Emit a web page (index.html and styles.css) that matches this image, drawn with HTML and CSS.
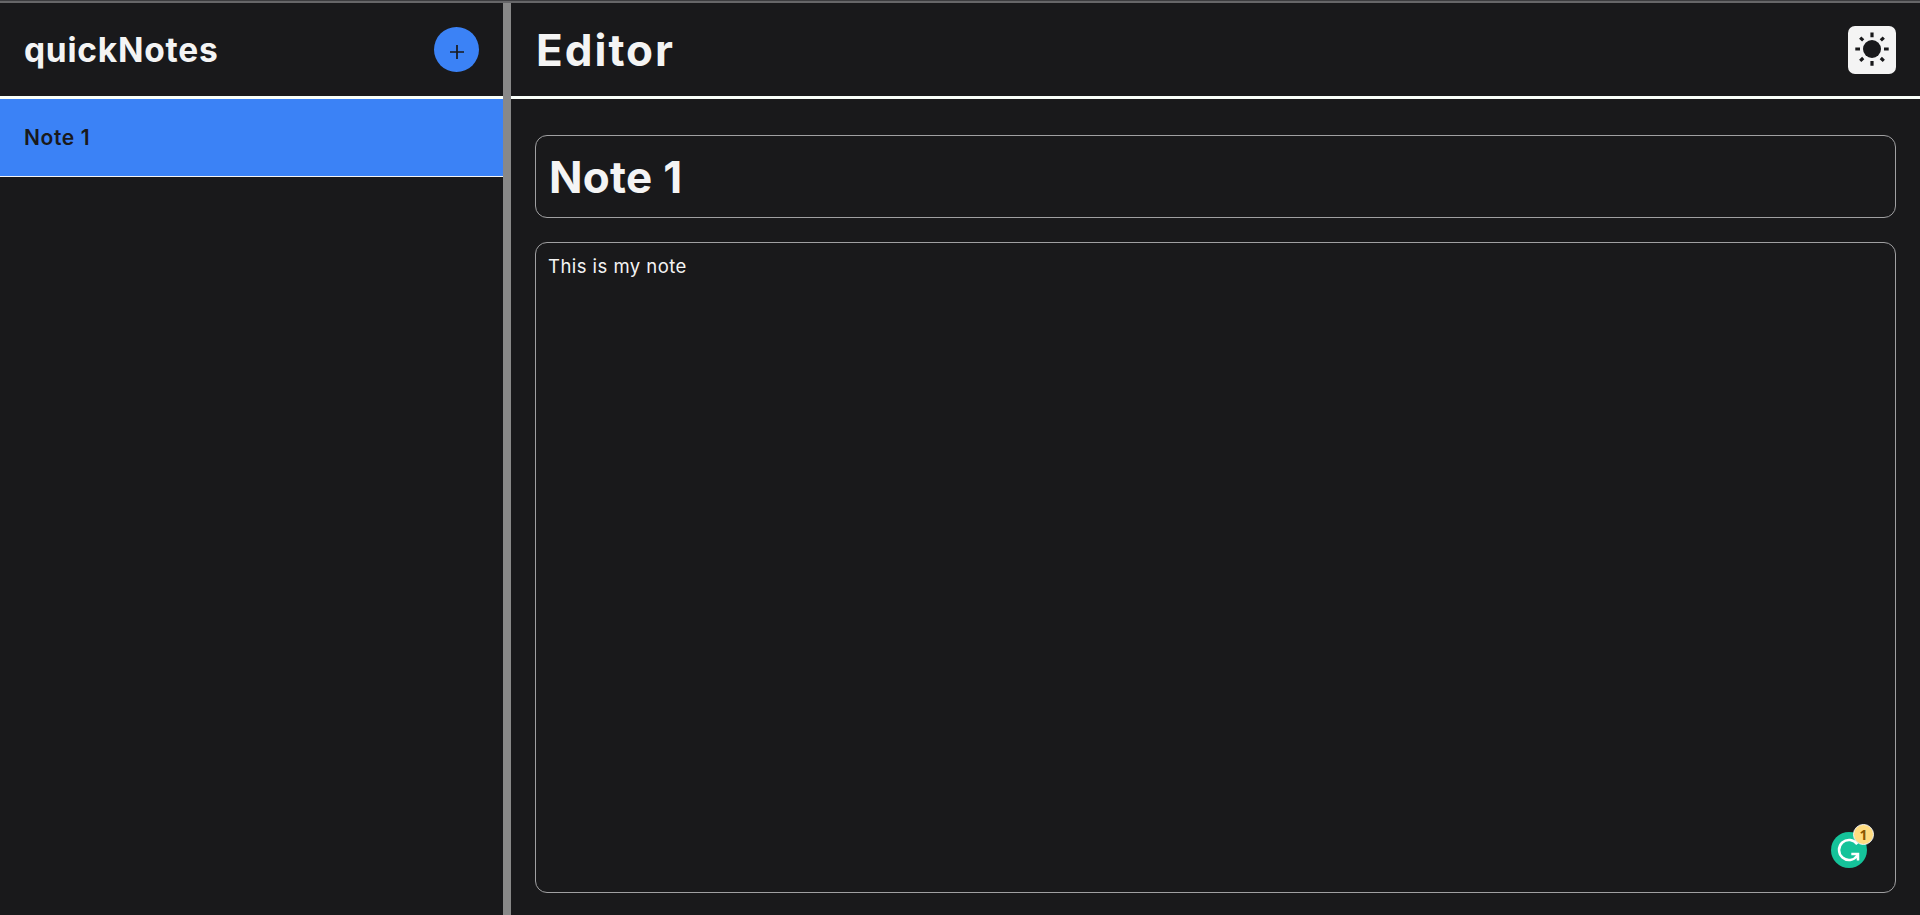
FILE: index.html
```html
<!DOCTYPE html>
<html lang="en">
<head>
<meta charset="utf-8">
<title>quickNotes</title>
<link rel="stylesheet" href="styles.css">
</head>
<body>
<div class="topline"></div>
<main class="split">
  <aside class="sidebar">
    <header class="bar">
      <h1 class="brand">quickNotes</h1>
      <button class="add" aria-label="New note">
        <svg width="45" height="45" viewBox="0 0 45 45"><path d="M16 25h14M23 18v14" stroke="#19191b" stroke-width="1.7"/></svg>
      </button>
    </header>
    <div class="note-item"><span class="note-name">Note 1</span></div>
  </aside>
  <div class="gutter"></div>
  <section class="editor">
    <header class="bar">
      <h2 class="heading">Editor</h2>
      <button class="theme" aria-label="Toggle theme">
        <svg width="48" height="48" viewBox="0 0 48 48">
          <circle cx="24" cy="23" r="9" fill="#19191b"/>
          <path d="M24 6.5v4.7M24 35v4.7M7.3 23h4.7M36 23h4.7M12.2 11.6l3 2.8M35.8 11.6l-3 2.8M12.2 34.8l3-2.8M35.8 34.8l-3-2.8" stroke="#19191b" stroke-width="3.2"/>
        </svg>
      </button>
    </header>
    <div class="fields">
      <div class="title-box"><span class="title-text">Note 1</span></div>
      <div class="body-box"><span class="body-text">This is my note</span>
        <div class="checker">
          <svg width="36" height="36" viewBox="0 0 36 36">
            <circle cx="18" cy="18" r="18" fill="#15c39a"/>
            <path d="M26.2 12.2A10 10 0 1 0 26.3 23.6M20.3 21.9h6.7v6.6" fill="none" stroke="#fff" stroke-width="2.5"/>
          </svg>
          <span class="count">1</span>
        </div>
      </div>
    </div>
  </section>
</main>
</body>
</html>
```
FILE: styles.css
```css
* { box-sizing: border-box; }
body {
  margin: 0;
  height: 100vh;
  display: flex;
  flex-direction: column;
  overflow: hidden;
  background: #19191b;
  color: #f4f4f4;
  font-family: Inter, sans-serif;
}
.topline { height: 3px; flex: none; background: #666668; border-top: 1px solid #3c3c3f; }
.split { flex: 1; display: flex; min-height: 0; }
.sidebar { width: 503px; flex: none; }
.gutter { width: 8px; flex: none; background: #888; }
.editor { flex: 1; display: flex; flex-direction: column; min-width: 0; }
.bar {
  height: 96px;
  flex: none;
  display: flex;
  align-items: center;
  justify-content: space-between;
  padding: 0 24px;
  border-bottom: 3px solid #f9fff9;
}
h1, h2 { margin: 0; white-space: nowrap; }
.brand { font-size: 33.5px; line-height: 40px; font-weight: 700; letter-spacing: .75px; padding-top: 1px; }
.heading { font-size: 44px; line-height: 52px; font-weight: 700; letter-spacing: 2px; padding-left: 1px; }
button { border: 0; padding: 0; display: block; }
button svg, .checker svg { display: block; }
.add { width: 45px; height: 45px; border-radius: 50%; background: #3b82f6; }
.theme { width: 48px; height: 48px; border-radius: 7px; background: #f4f4f4; }
.note-item {
  height: 78px;
  display: flex;
  align-items: center;
  padding: 0 24px;
  background: #3b82f6;
  border-bottom: 1px solid #f4f4f4;
  color: #19191b;
}
.note-name { font-size: 21px; font-weight: 600; letter-spacing: .6px; }
.fields { flex: 1; display: flex; flex-direction: column; gap: 24px; padding: 36px 24px 22px; }
.title-box, .body-box { border: 1px solid #a0a0a2; border-radius: 12px; }
.title-box { height: 83px; flex: none; display: flex; align-items: center; padding: 1px 13px 0; }
.title-text { font-size: 44px; font-weight: 700; letter-spacing: .3px; }
.body-box { flex: 1; position: relative; padding: 10px 12px; }
.body-text { font-size: 18.5px; line-height: 26px; letter-spacing: .45px; }
.checker { position: absolute; right: 28px; bottom: 24px; }
.count {
  position: absolute;
  left: 22px;
  top: -8px;
  width: 21px;
  height: 21px;
  border: 1px solid #f4f4f4;
  border-radius: 50%;
  background: #ffdc80;
  color: #8a5600;
  font: 700 14px/19px "Open Sans", sans-serif;
  text-align: center;
}
```
